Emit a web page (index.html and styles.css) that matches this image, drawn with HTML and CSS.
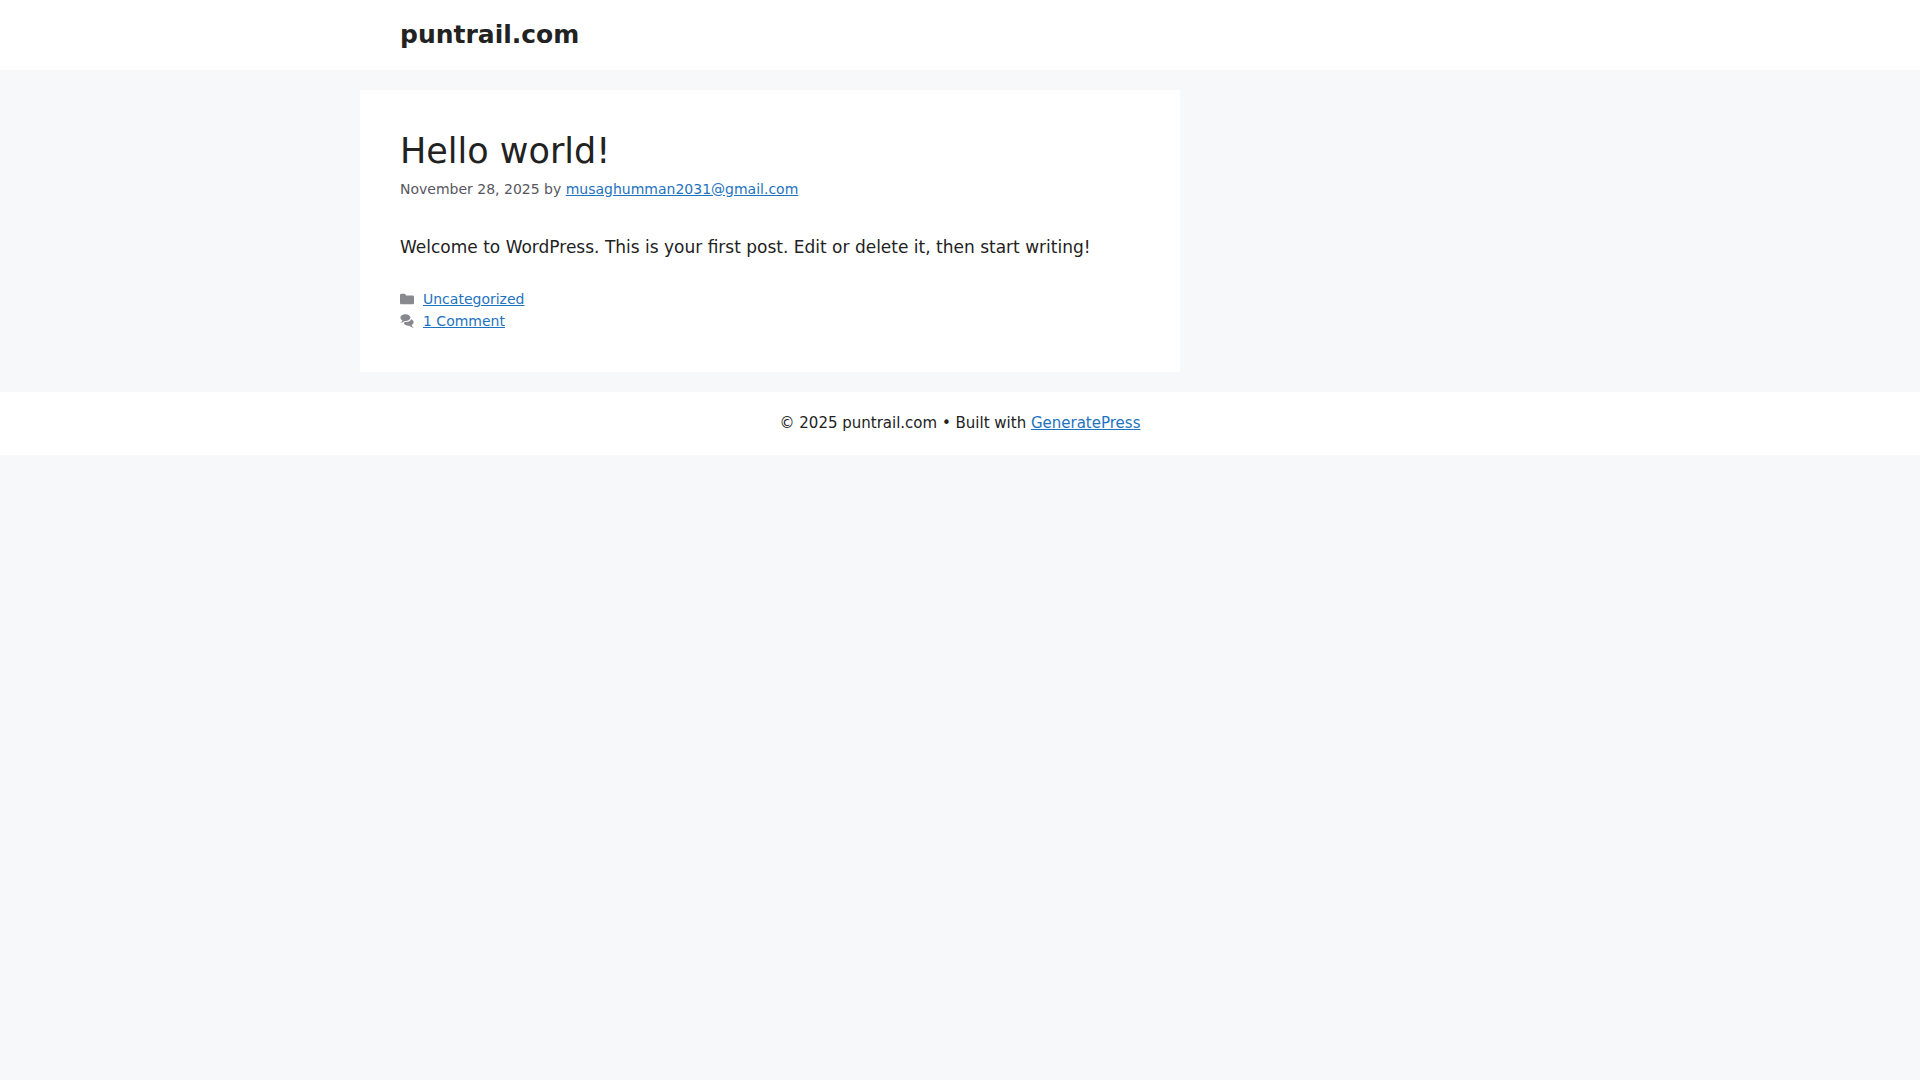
FILE: index.html
```html
<!DOCTYPE html>
<html lang="en">
<head>
    <meta charset="UTF-8">
    <meta name="viewport" content="width=device-width, initial-scale=1">
    <title>puntrail.com</title>
    <link rel="stylesheet" href="styles.css">
</head>
<body>
<header class="site-header">
    <div class="inside-header">
        <a class="main-title" href="#">puntrail.com</a>
    </div>
</header>
<div class="site-content">
    <main class="content-area">
        <article class="post">
            <h2 class="entry-title"><a href="#">Hello world!</a></h2>
            <div class="entry-meta">
                <time datetime="2025-11-28">November 28, 2025</time> by <a href="#">musaghumman2031@gmail.com</a>
            </div>
            <div class="entry-summary">
                <p>Welcome to WordPress. This is your first post. Edit or delete it, then start writing!</p>
            </div>
            <footer class="post-footer">
                <div class="meta-item">
                    <svg class="icon" viewBox="0 0 512 512" aria-hidden="true">
                        <path d="M0 112c0-26.51 21.49-48 48-48h110.014a48 48 0 0143.592 27.907l12.349 26.791A16 16 0 00228.486 128H464c26.51 0 48 21.49 48 48v224c0 26.51-21.49 48-48 48H48c-26.51 0-48-21.49-48-48V112z"/>
                    </svg>
                    <a href="#">Uncategorized</a>
                </div>
                <div class="meta-item">
                    <svg class="icon" viewBox="0 0 512 512" aria-hidden="true">
                        <path d="M132.838 329.973a435.298 435.298 0 0016.769-9.004c13.363-7.574 26.587-16.142 37.419-25.507 7.544.597 15.27.925 23.098.925 54.905 0 105.634-15.311 143.285-41.28 23.728-16.365 43.115-37.692 54.155-62.645 54.699 22.205 91.498 63.272 91.498 110.286 0 42.186-29.626 79.498-75.15 102.828 23.46 49.216 75.09 101.709 75.09 101.709s-115.837-38.35-154.424-78.46c-9.956 1.12-20.297 1.758-30.793 1.758-88.727 0-162.927-43.071-181.007-100.61z"/>
                        <path d="M383.371 132.502c0 70.603-82.961 127.787-185.216 127.787-10.496 0-20.837-.639-30.793-1.757-38.587 40.093-154.424 78.429-154.424 78.429s51.63-52.472 75.09-101.67c-45.523-23.321-75.15-60.619-75.15-102.79C12.88 61.9 95.79 4.714 198.098 4.714s185.27 57.184 185.27 127.788z"/>
                    </svg>
                    <a href="#">1 Comment</a>
                </div>
            </footer>
        </article>
    </main>
</div>
<footer class="site-info">
    © 2025 puntrail.com • Built with <a href="#">GeneratePress</a>
</footer>
</body>
</html>
```
FILE: styles.css
```css
body, h2, p {
    margin: 0;
    padding: 0;
}
* {
    box-sizing: border-box;
}
body {
    background-color: #f7f8f9;
    color: #222222;
    font: 17px/26px "DejaVu Sans", sans-serif;
}
a {
    color: #1e73be;
}
.site-header {
    background-color: #ffffff;
}
.inside-header {
    max-width: 1200px;
    margin: 0 auto;
    padding: 20px 40px;
}
.main-title {
    display: block;
    color: #222222;
    font-size: 25px;
    font-weight: bold;
    line-height: 30px;
    text-decoration: none;
}
.site-content {
    max-width: 1200px;
    margin: 0 auto;
    padding: 20px 0;
}
/* the other 30% is the empty sidebar */
.content-area {
    width: 70%;
    padding-right: 20px;
}
.post {
    padding: 40px;
    background-color: #ffffff;
}
.entry-title {
    font-size: 35px;
    font-weight: normal;
    line-height: 42px;
}
.entry-title a {
    color: #222222;
    text-decoration: none;
}
.entry-meta {
    margin-top: 6px;
    color: #575760;
    font-size: 14px;
    line-height: 22px;
}
.entry-summary {
    margin-top: 34px;
}
.post-footer {
    margin-top: 28px;
    color: #575760;
    font-size: 14px;
    line-height: 22px;
}
.meta-item {
    display: flex;
    align-items: center;
    gap: 9px;
}
.icon {
    width: 14px;
    height: 14px;
    fill: currentColor;
    opacity: 0.7;
}
.site-info {
    padding: 20px 40px;
    background-color: #ffffff;
    font-size: 15px;
    line-height: 23px;
    text-align: center;
}
```
